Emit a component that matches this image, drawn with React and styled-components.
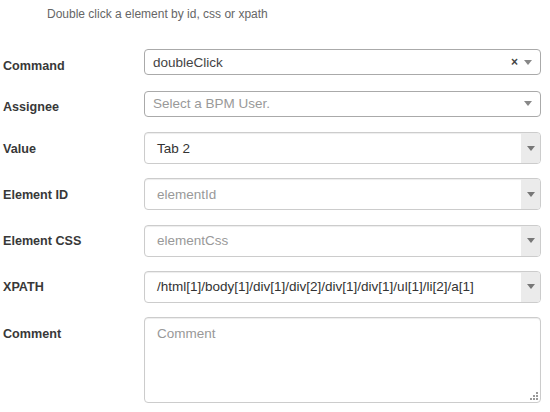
import React from 'react';
import styled, { createGlobalStyle } from 'styled-components';

const GlobalStyle = createGlobalStyle`
  body {
    margin: 0;
    background: #fff;
    font-family: "Liberation Sans", Arial, sans-serif;
    color: #333;
  }
`;

const Form = styled.div`
  width: 550px;
  padding: 0 9px 0 3px;
  box-sizing: border-box;
`;

const Description = styled.p`
  margin: 0;
  padding: 6px 0 0 44px;
  height: 49px;
  box-sizing: border-box;
  font-size: 12px;
  line-height: 16px;
  color: #666;
`;

const Row = styled.div`
  display: grid;
  grid-template-columns: 141px 1fr;
  align-items: start;
  margin-bottom: ${(p) => p.$gap || 14.3}px;
`;

const Label = styled.label`
  font-size: 12.6px;
  font-weight: bold;
  line-height: 19px;
  padding-top: 7.5px;
  color: #383838;
`;

const Select2 = styled.div`
  height: 26px;
  box-sizing: border-box;
  border: 1px solid #aaa;
  border-radius: 4px;
  display: flex;
  align-items: center;
  padding: 0 8px 0 8px;
  font-size: 13.5px;
  color: ${(p) => (p.$placeholder ? '#999' : '#444')};
  background: #fff;
`;

const Grow = styled.span`
  flex: 1;
  white-space: nowrap;
`;

const Clear = styled.span`
  font-size: 12px;
  font-weight: bold;
  color: #444;
  margin-right: 6px;
  line-height: 1;
`;

const Caret = styled.span`
  width: 0;
  height: 0;
  border-left: 4px solid transparent;
  border-right: 4px solid transparent;
  border-top: 5px solid ${(p) => p.$color || '#888'};
`;

const Combo = styled.div`
  height: 32px;
  box-sizing: border-box;
  border: 1px solid #ccc;
  border-radius: 4px;
  display: flex;
  overflow: hidden;
  background: #fff;
  box-shadow: inset 0 1px 1px rgba(0, 0, 0, 0.075);
`;

const ComboText = styled.div`
  flex: 1;
  display: flex;
  align-items: center;
  padding-left: 12px;
  font-size: 13.5px;
  white-space: nowrap;
  color: ${(p) => (p.$placeholder ? '#999' : '#333')};
`;

const ComboButton = styled.div`
  width: 19px;
  background: #ebebeb;
  display: flex;
  align-items: center;
  justify-content: center;
`;

const TextArea = styled.div`
  position: relative;
  height: 86px;
  box-sizing: border-box;
  border: 1px solid #ccc;
  border-radius: 4px;
  padding: 6px 12px;
  font-size: 13.5px;
  line-height: 20px;
  color: #999;
  box-shadow: inset 0 1px 1px rgba(0, 0, 0, 0.075);
`;

const Grip = styled.svg`
  position: absolute;
  right: 2px;
  bottom: 2px;
`;

const comboFields = [
  { label: 'Value', text: 'Tab 2' },
  { label: 'Element ID', text: 'elementId', placeholder: true },
  { label: 'Element CSS', text: 'elementCss', placeholder: true },
  { label: 'XPATH', text: '/html[1]/body[1]/div[1]/div[2]/div[1]/div[1]/ul[1]/li[2]/a[1]' },
];

export default function App() {
  return (
    <>
      <GlobalStyle />
      <Form>
        <Description>Double click a element by id, css or xpath</Description>
        <Row $gap={15}>
          <Label>Command</Label>
          <Select2>
            <Grow>doubleClick</Grow>
            <Clear>×</Clear>
            <Caret />
          </Select2>
        </Row>
        <Row $gap={15}>
          <Label>Assignee</Label>
          <Select2 $placeholder>
            <Grow>Select a BPM User.</Grow>
            <Caret />
          </Select2>
        </Row>
        {comboFields.map((f) => (
          <Row key={f.label}>
            <Label>{f.label}</Label>
            <Combo>
              <ComboText $placeholder={f.placeholder}>{f.text}</ComboText>
              <ComboButton>
                <Caret $color="#777" />
              </ComboButton>
            </Combo>
          </Row>
        ))}
        <Row>
          <Label>Comment</Label>
          <TextArea>
            Comment
            <Grip width="8" height="8" viewBox="0 0 8 8">
              <rect x="6" y="0" width="2" height="2" fill="#999" />
              <rect x="3" y="3" width="2" height="2" fill="#999" />
              <rect x="6" y="3" width="2" height="2" fill="#999" />
              <rect x="0" y="6" width="2" height="2" fill="#999" />
              <rect x="3" y="6" width="2" height="2" fill="#999" />
              <rect x="6" y="6" width="2" height="2" fill="#999" />
            </Grip>
          </TextArea>
        </Row>
      </Form>
    </>
  );
}
